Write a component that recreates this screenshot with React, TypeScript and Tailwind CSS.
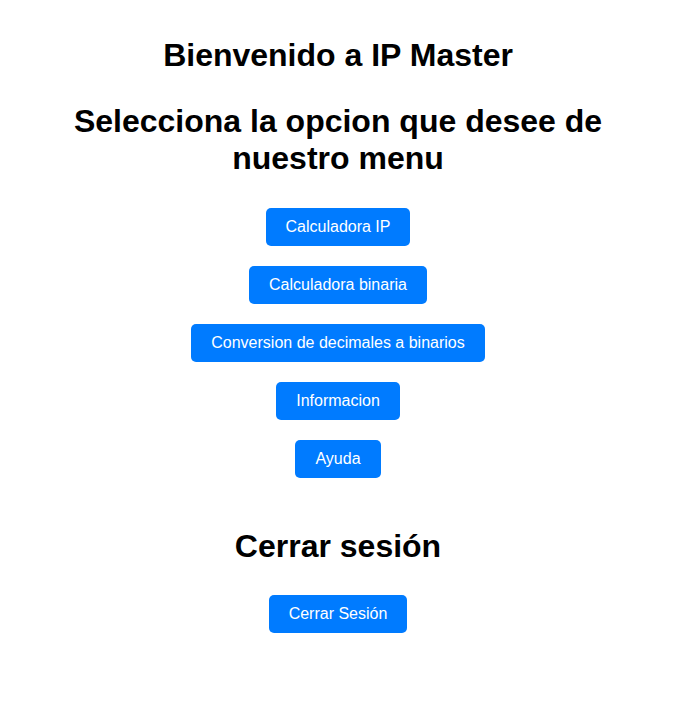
import React from "react";

const btn =
  "rounded-[5px] bg-[#007bff] text-white text-[16px] leading-[18px] px-5 py-[10px] font-['Liberation_Sans',Arial,sans-serif]";

export default function App() {
  const items = [
    "Calculadora IP",
    "Calculadora binaria",
    "Conversion de decimales a binarios",
    "Informacion",
    "Ayuda",
  ];
  return (
    <div className="min-h-screen bg-white text-black font-['Liberation_Sans',Arial,sans-serif] pr-[20px]">
      <div className="flex flex-col items-center text-center pt-[37px]">
        <h1 className="text-[32px] font-bold leading-[36.8px]">Bienvenido a IP Master</h1>
        <h2 className="mt-[29px] text-[32px] font-bold leading-[36.8px] max-w-[580px]">
          Selecciona la opcion que desee de nuestro menu
        </h2>
        <div className="mt-[32px] flex flex-col items-center gap-5">
          {items.map((t) => (
            <button key={t} className={btn}>
              {t}
            </button>
          ))}
        </div>
        <h2 className="mt-[50px] text-[32px] font-bold leading-[36.8px]">Cerrar sesión</h2>
        <button className={`${btn} mt-[30px]`}>Cerrar Sesión</button>
      </div>
    </div>
  );
}
